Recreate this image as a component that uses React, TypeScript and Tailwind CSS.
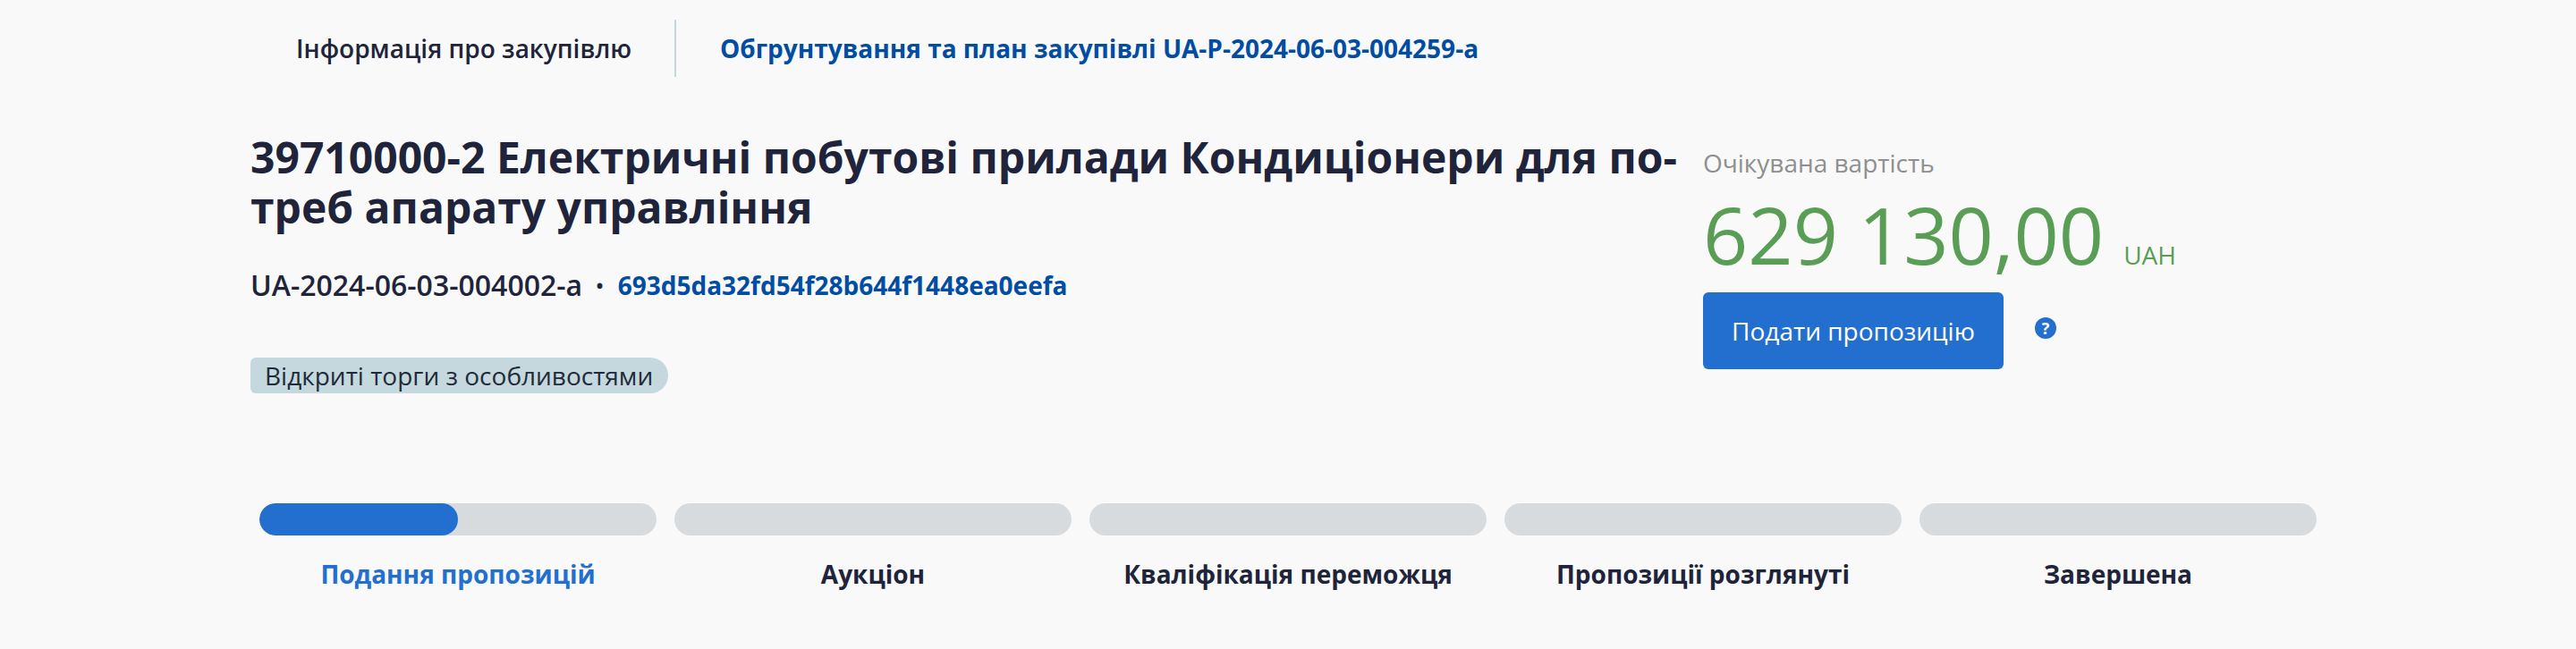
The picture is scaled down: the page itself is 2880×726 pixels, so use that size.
export default function App() {
  const steps = [
    { label: "Подання пропозицій", active: true },
    { label: "Аукціон" },
    { label: "Кваліфікація переможця" },
    { label: "Пропозиції розглянуті" },
    { label: "Завершена" },
  ];
  return (
    <div className="h-[726px] w-[2880px] bg-[#f9f9fa] text-[#20243a] font-['Open_Sans',sans-serif] overflow-hidden">
      <div className="flex items-center pt-[22px] pl-[331px]">
        <span className="w-[372px] text-[28px] leading-[64px] font-semibold h-[64px] whitespace-nowrap">Інформація про закупівлю</span>
        <div className="w-[2px] h-[64px] bg-[#c5d8de] ml-[51px]" />
        <a className="ml-[49px] text-[28px] leading-[64px] font-bold text-[#004da1]">
          Обгрунтування та план закупівлі UA-P-2024-06-03-004259-a
        </a>
      </div>
      <div className="flex pl-[280px] mt-[62px]">
        <div className="w-[1624px]">
          <h1 className="text-[48px] leading-[56px] font-bold">
            39710000-2 Електричні побутові прилади Кондиціонери для по-
            <br />
            треб апарату управління
          </h1>
          <div className="flex items-center mt-[39px] h-[40px]">
            <span className="text-[32px] font-semibold leading-[40px]">UA-2024-06-03-004002-a</span>
            <span className="ml-[14px] mr-[15px] text-[28px] leading-[40px]">•</span>
            <a className="text-[28px] font-bold leading-[40px] text-[#004da1]">693d5da32fd54f28b644f1448ea0eefa</a>
          </div>
          <div className="mt-[61px] inline-flex items-center h-[40px] pl-[16px] pr-[17px] bg-[#c5d8de] rounded-l-[6px] rounded-r-[20px] text-[28px] leading-[40px] text-[#1f2b3a]">
            Відкриті торги з особливостями
          </div>
        </div>
        <div>
          <div className="text-[28px] leading-[40px] text-[#8f8f8f] mt-[14px]">Очікувана вартість</div>
          <div className="flex items-baseline text-[#5a9e56] mt-[12px] h-[96px]">
            <span className="text-[88px] leading-[96px]">629 130,00</span>
            <span className="text-[28px] ml-[22px] leading-[40px]">UAH</span>
          </div>
          <div className="flex items-center mt-[17px]">
            <button className="w-[336px] h-[86px] bg-[#226fd0] rounded-[6px] text-white text-[28px] leading-[40px]">
              Подати пропозицію
            </button>
            <span className="ml-[35px] mb-[7px] w-[24px] h-[24px] rounded-full bg-[#226fd0] text-white text-[18px] leading-[24px] font-bold text-center">
              ?
            </span>
          </div>
        </div>
      </div>
      <div className="grid grid-cols-5 gap-[20px] w-[2300px] ml-[290px] mt-[123px]">
        {steps.map((s) => (
          <div key={s.label} className="flex flex-col items-center">
            <div className="w-full h-[36px] rounded-[18px] bg-[#d7dbde] overflow-hidden">
              {s.active && <div className="w-1/2 h-full rounded-[18px] bg-[#226fd0]" />}
            </div>
            <div className={`mt-[23px] text-[28px] leading-[40px] font-bold ${s.active ? "text-[#226fd0]" : "text-[#20243a]"}`}>
              {s.label}
            </div>
          </div>
        ))}
      </div>
    </div>
  );
}
